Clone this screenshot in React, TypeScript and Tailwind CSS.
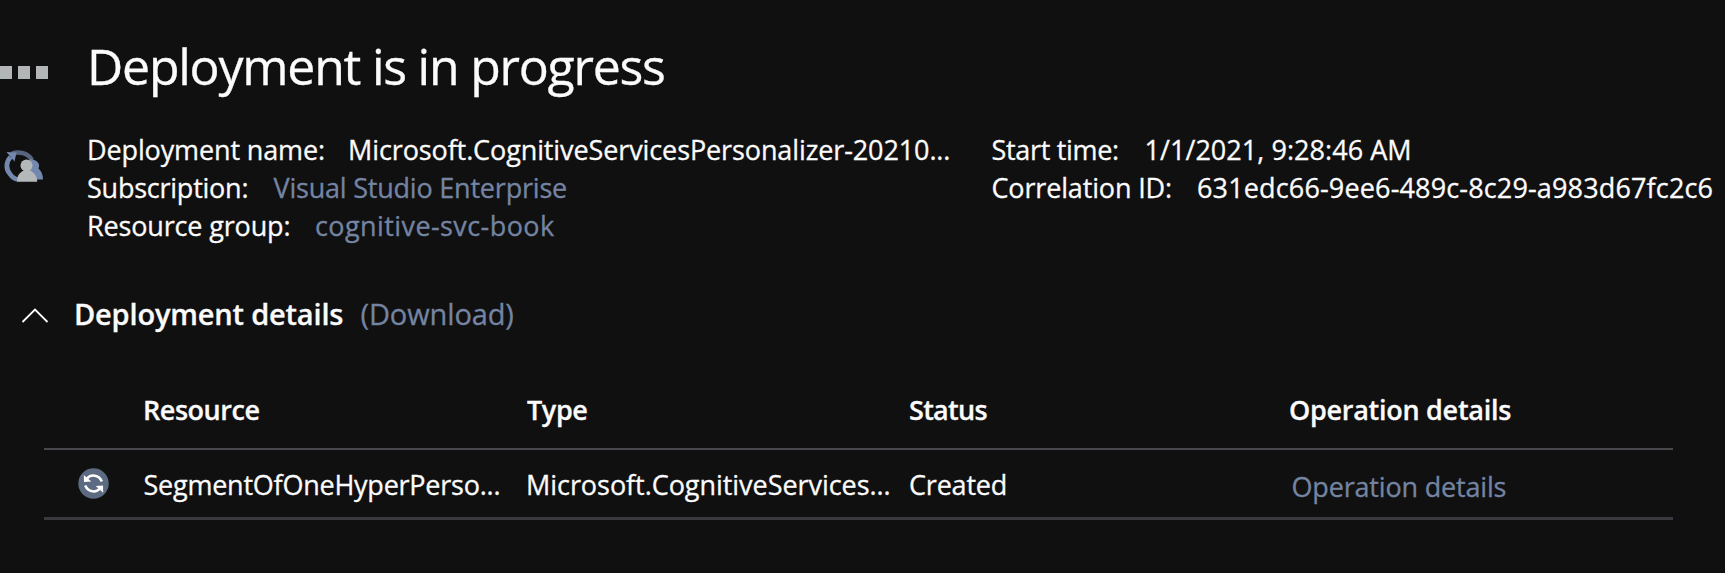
function DotsIcon() {
  return (
    <div className="flex h-[13px] w-[49px] gap-[6px]">
      <span className="h-[13px] w-[12px] bg-[#b2b6b7]" />
      <span className="h-[13px] w-[12px] bg-[#b2b6b7]" />
      <span className="h-[13px] w-[12px] bg-[#b2b6b7]" />
    </div>
  );
}

function PersonalizerIcon() {
  return (
    <svg className="block h-[36px] w-[44px]" viewBox="0 0 44 36" fill="none">
      <path d="M12 4.500C19 2 28 4 32 11" stroke="#56647e" strokeWidth="4.500" />
      <path d="M30 10C36 10.500 41 14 38.500 19.500C41.500 22 43 26 43 30.500H30L27 17Z" fill="#7488ad" />
      <path d="M10.500 8C6 13 5.500 20 10 25C12 28 15 30 18 30.500" stroke="#7488ad" strokeWidth="4.800" />
      <path d="M6.500 3L16.500 3.500L14.500 12.500Z" fill="#7488ad" />
      <circle cx="26.500" cy="16.500" r="6" fill="#b4b8b8" />
      <path d="M17 32.800C17 26 20 23.500 23.500 21.500H30C34 23.500 37.200 27 37.200 32.800Z" fill="#b4b8b8" />
    </svg>
  );
}

function SyncIcon() {
  return (
    <svg className="block h-[31px] w-[31px]" viewBox="0 0 31 31" fill="none">
      <circle cx="15.500" cy="15.500" r="15.200" fill="#5c6a82" />
      <path d="M9 10.500C13 6 21 6.500 23.800 13.500" stroke="#fff" strokeWidth="2.600" />
      <path d="M22 20.500C18 25 10.500 24.500 7.200 17.500" stroke="#fff" strokeWidth="2.600" />
      <path d="M5.800 7L6 14L13.300 13.600Z" fill="#fff" />
      <path d="M25.200 24.800L25 17.500L17.700 17.900Z" fill="#fff" />
    </svg>
  );
}

export default function App() {
  return (
    <main className="flex h-[573px] w-[1725px] flex-col overflow-hidden bg-[#101010] font-['Open_Sans',sans-serif] text-[27px] leading-[38px] whitespace-nowrap text-[#fbfbfb] [-webkit-text-stroke:0.3px]">
      <header className="mt-[36px] flex h-[60px]">
        <div className="w-[87px] shrink-0 pt-[30px]">
          <DotsIcon />
        </div>
        <h1 className="text-[50px] leading-[60px] tracking-[-1.24px]">Deployment is in progress</h1>
      </header>

      <section className="mt-[35px] flex h-[114px]">
        <div className="w-[87px] shrink-0 pt-[18px]">
          <PersonalizerIcon />
        </div>
        <dl className="w-[904.500px] shrink-0">
          <div className="flex">
            <dt className="w-[261px] tracking-[-0.13px]">Deployment name:</dt>
            <dd className="tracking-[-0.11px]">Microsoft.CognitiveServicesPersonalizer-20210...</dd>
          </div>
          <div className="flex">
            <dt className="w-[186.500px] tracking-[-0.24px]">Subscription:</dt>
            <dd className="tracking-[-0.21px] text-[#7484a2]">Visual Studio Enterprise</dd>
          </div>
          <div className="flex">
            <dt className="w-[228px] tracking-[-0.16px]">Resource group:</dt>
            <dd className="tracking-[0.41px] text-[#7484a2]">cognitive-svc-book</dd>
          </div>
        </dl>
        <dl>
          <div className="flex">
            <dt className="w-[153px] tracking-[-0.32px]">Start time:</dt>
            <dd className="tracking-[0.05px]">1/1/2021, 9:28:46 AM</dd>
          </div>
          <div className="flex">
            <dt className="w-[205.500px] tracking-[-0.16px]">Correlation ID:</dt>
            <dd className="tracking-[0.15px]">631edc66-9ee6-489c-8c29-a983d67fc2c6</dd>
          </div>
        </dl>
      </section>

      <section className="mt-[49px] flex h-[40px] text-[29px] leading-[40px]">
        <div className="w-[74px] shrink-0 pt-[13px] pl-[21px]">
          <svg className="block h-[16px] w-[28px]" viewBox="0 0 28 16" fill="none">
            <path d="M1.500 15L14 2.500L26.500 15" stroke="#fbfbfb" strokeWidth="1.800" />
          </svg>
        </div>
        <h2 className="w-[286.500px] font-semibold tracking-[-0.18px]">Deployment details</h2>
        <span className="tracking-[-0.12px] text-[#7484a2]">(Download)</span>
      </section>

      <div className="mt-[46px] ml-[43.500px] w-[1629px]">
        <div className="grid h-[70px] grid-cols-[99.500px_383px_383px_380px_1fr] border-b-2 border-[#46484c] pt-[11px] font-semibold">
          <span />
          <span className="tracking-[-0.45px]">Resource</span>
          <span className="pl-[1px] tracking-[-0.4px]">Type</span>
          <span className="tracking-[-0.7px]">Status</span>
          <span className="tracking-[-0.27px]">Operation details</span>
        </div>
        <div className="grid h-[70px] grid-cols-[99.500px_383px_383px_380px_1fr] border-b-3 border-[#383a3e] pt-[16px]">
          <span className="pt-[2px] pl-[34.500px]">
            <SyncIcon />
          </span>
          <span className="pl-[0.5px] tracking-[-0.24px]">SegmentOfOneHyperPerso...</span>
          <span className="tracking-[-0.05px]">Microsoft.CognitiveServices...</span>
          <span className="tracking-[-0.2px]">Created</span>
          <span className="pt-[2px] pl-[2.5px] tracking-[-0.18px] text-[#7484a2]">Operation details</span>
        </div>
      </div>
    </main>
  );
}
